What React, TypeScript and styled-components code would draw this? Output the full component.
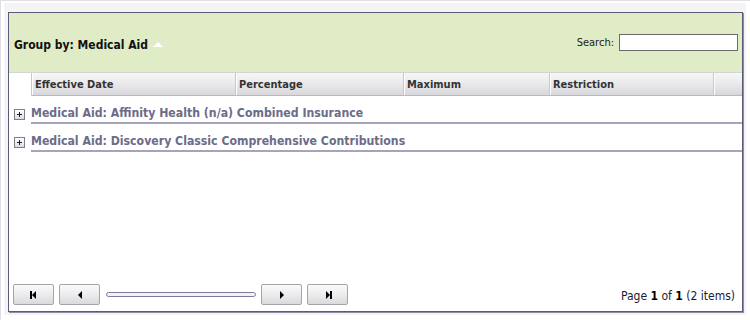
import styled, { createGlobalStyle } from "styled-components";

const GlobalStyle = createGlobalStyle`
  html, body {
    margin: 0;
    padding: 0;
    background: #ffffff;
  }
  body {
    font-family: "DejaVu Sans Condensed", "Liberation Sans", sans-serif;
    font-size: 11px;
    color: #000;
  }
`;

const Page = styled.div`
  width: 750px;
  height: 320px;
  box-sizing: border-box;
  border-top: 1px solid #e2dee8;
  border-left: 1px solid #e2dee8;
  padding: 2px 0 0 3px;
`;

const Well = styled.div`
  width: 742px;
  box-sizing: border-box;
  background: #f4f4f4;
  padding: 9px 3px 3px 4px;
`;

const Grid = styled.div`
  width: 735px;
  height: 300px;
  box-sizing: border-box;
  border: 1px solid #5b5a78;
  box-shadow: 1px 1px 0 #8e8ca2;
  background: #ffffff;
  display: flex;
  flex-direction: column;
`;

const GroupPanel = styled.div`
  height: 59px;
  background: #dfecc6;
  display: flex;
  align-items: center;
  justify-content: space-between;
  padding: 0 4px 0 5px;
  border-bottom: 1px solid #d4d4d4;
`;

const GroupBy = styled.div`
  font-weight: bold;
  font-size: 12px;
  color: #111;
  display: flex;
  align-items: center;
  gap: 5px;
  padding-top: 4px;
`;

const Caret = styled.span`
  width: 0;
  height: 0;
  border-left: 5px solid transparent;
  border-right: 5px solid transparent;
  border-bottom: 5px solid #ffffff;
`;

const SearchBox = styled.label`
  display: flex;
  align-items: center;
  gap: 5px;
  font-size: 11px;
  color: #222;
  padding-bottom: 1px;
`;

const SearchInput = styled.input`
  width: 119px;
  height: 17px;
  box-sizing: border-box;
  border: 1px solid #6a6a6a;
  padding: 0 2px;
  margin: 0;
  outline: none;
`;

const HeaderRow = styled.div`
  display: flex;
  height: 23px;
  padding-left: 22px;
`;

const HeaderCell = styled.div<{ $w: number }>`
  width: ${(p) => p.$w}px;
  flex: ${(p) => (p.$w ? "none" : "1")};
  box-sizing: border-box;
  display: flex;
  align-items: center;
  padding-left: 3px;
  font-weight: bold;
  font-size: 11px;
  color: #333;
  background: linear-gradient(#f7f7f7, #e6e6e9 60%, #d8d8dc);
  border-bottom: 1px solid #b9b9c2;
  border-left: 1px solid #c8c8cc;
  box-shadow: inset 1px 0 0 #ffffff;
`;

const Body = styled.div`
  flex: 1;
`;

const GroupRow = styled.div`
  height: 28px;
  box-sizing: border-box;
  padding: 8px 0 0 5px;
  display: flex;
  align-items: center;
  gap: 6px;
`;

const Expand = styled.span`
  width: 11px;
  height: 11px;
  box-sizing: border-box;
  border: 1px solid #7d7d8d;
  background: linear-gradient(#ffffff, #dcdce4);
  display: flex;
  align-items: center;
  justify-content: center;
`;

const GroupTitle = styled.div`
  flex: 1;
  line-height: 16px;
  padding: 1px 0 1px;
  border-bottom: 2px solid #a6a3bb;
  font-weight: bold;
  font-size: 12.2px;
  color: #6c6b89;
`;

const Pager = styled.div`
  display: flex;
  align-items: center;
  padding: 0 7px 4px 4px;
  height: 25px;
`;

const PagerButton = styled.button`
  width: 41px;
  height: 21px;
  margin: 0 5px 0 0;
  padding: 0;
  box-sizing: border-box;
  border: 1px solid #a4a4ac;
  border-radius: 2px;
  background: linear-gradient(#fafafa, #ececee 50%, #dadade);
  display: flex;
  align-items: center;
  justify-content: center;
`;

const Track = styled.div`
  width: 150px;
  height: 5px;
  box-sizing: border-box;
  border: 1px solid #7e7c94;
  border-radius: 3px;
  background: #f2f2f4;
  margin: 0 5px 0 1px;
`;

const PageInfo = styled.div`
  margin-left: auto;
  font-size: 12px;
  color: #1a1a3a;
  padding-top: 2px;
  b {
    color: #000;
  }
`;

const columns = [
  { title: "Effective Date", w: 204 },
  { title: "Percentage", w: 168 },
  { title: "Maximum", w: 146 },
  { title: "Restriction", w: 164 },
  { title: "", w: 0 },
];

const groups = [
  "Medical Aid: Affinity Health (n/a) Combined Insurance",
  "Medical Aid: Discovery Classic Comprehensive Contributions",
];

function PlusIcon() {
  return (
    <svg width="7" height="7" viewBox="0 0 7 7">
      <path d="M3 1h1v5H3zM1 3h5v1H1z" fill="#1a1a2a" />
    </svg>
  );
}

function NavIcon({ dir, end }: { dir: "left" | "right"; end?: boolean }) {
  const tri = dir === "left" ? "M7 0v8L3 4z" : "M3 0v8l4-4z";
  const bar = dir === "left" ? "M1 0h2v8H1z" : "M7 0h2v8H7z";
  return (
    <svg width="10" height="8" viewBox="0 0 10 8">
      <path d={tri} fill="#000" />
      {end && <path d={bar} fill="#000" />}
    </svg>
  );
}

export default function App() {
  return (
    <>
      <GlobalStyle />
      <Page>
        <Well>
          <Grid>
            <GroupPanel>
              <GroupBy>
                Group by: Medical Aid <Caret />
              </GroupBy>
              <SearchBox>
                Search:
                <SearchInput type="text" />
              </SearchBox>
            </GroupPanel>
            <HeaderRow>
              {columns.map((c, i) => (
                <HeaderCell key={i} $w={c.w}>
                  {c.title}
                </HeaderCell>
              ))}
            </HeaderRow>
            <Body>
              {groups.map((g) => (
                <GroupRow key={g}>
                  <Expand>
                    <PlusIcon />
                  </Expand>
                  <GroupTitle>{g}</GroupTitle>
                </GroupRow>
              ))}
            </Body>
            <Pager>
              <PagerButton>
                <NavIcon dir="left" end />
              </PagerButton>
              <PagerButton>
                <NavIcon dir="left" />
              </PagerButton>
              <Track />
              <PagerButton>
                <NavIcon dir="right" />
              </PagerButton>
              <PagerButton>
                <NavIcon dir="right" end />
              </PagerButton>
              <PageInfo>
                Page <b>1</b> of <b>1</b> (2 items)
              </PageInfo>
            </Pager>
          </Grid>
        </Well>
      </Page>
    </>
  );
}
